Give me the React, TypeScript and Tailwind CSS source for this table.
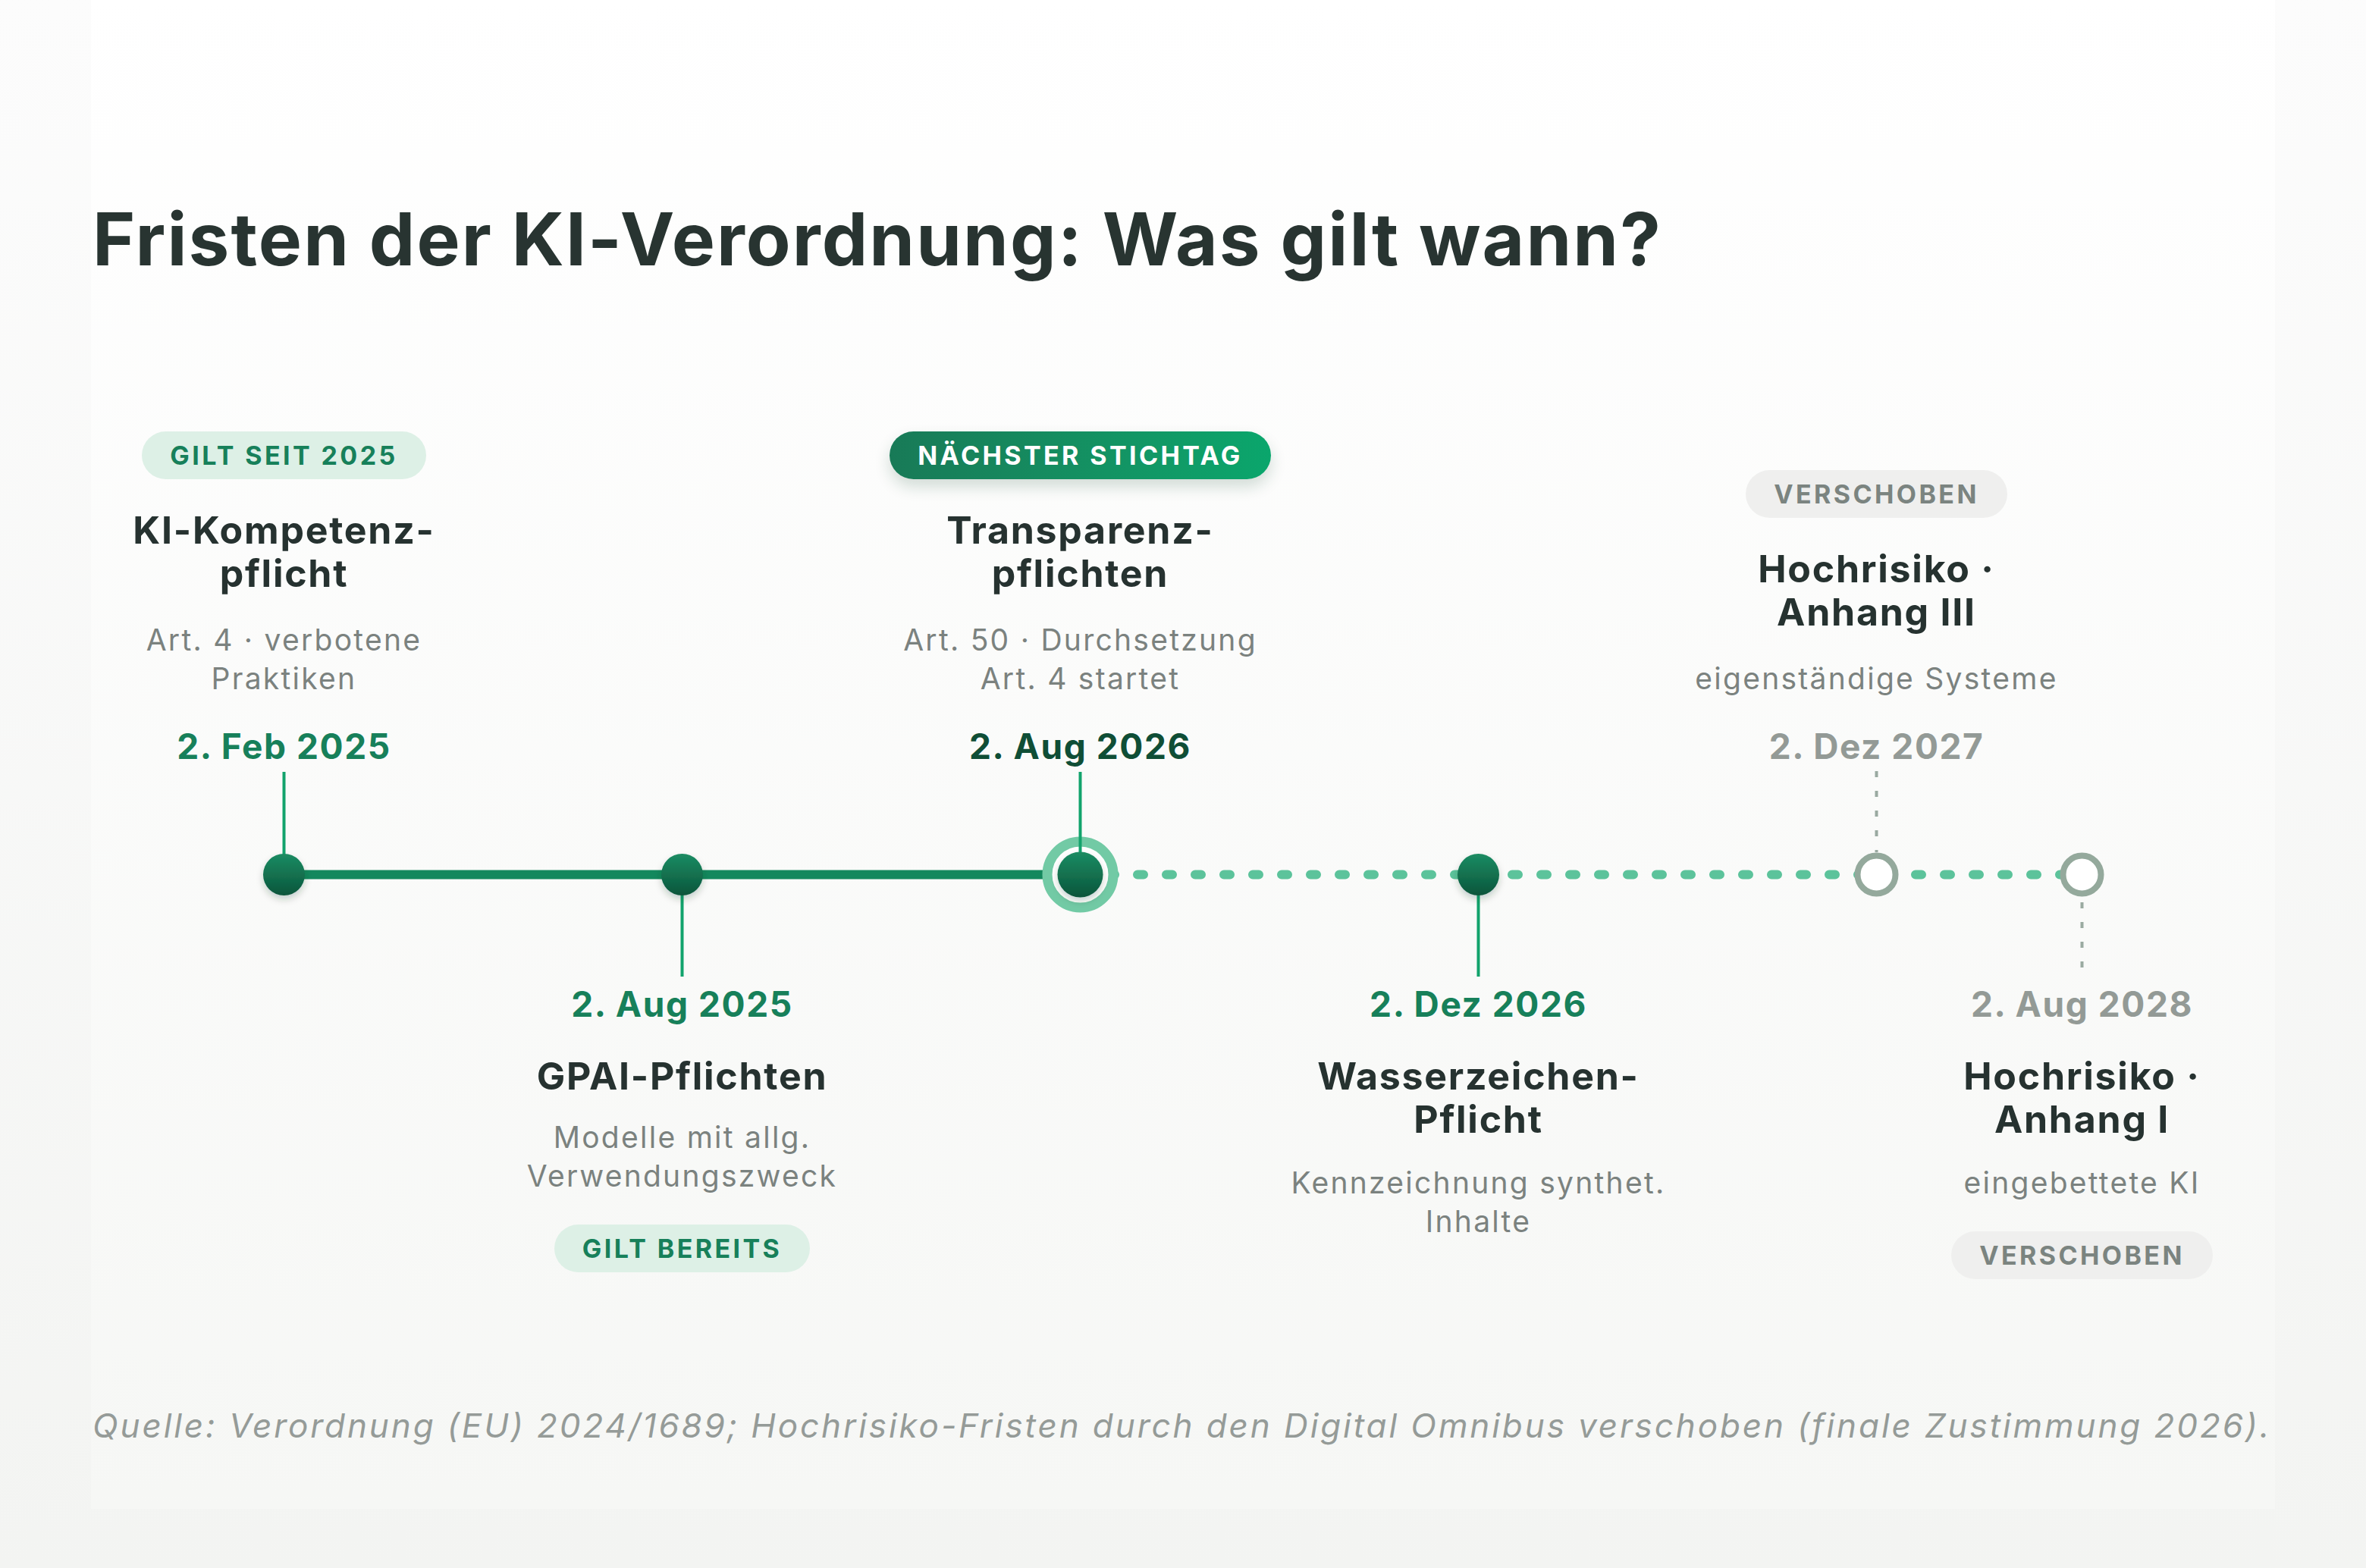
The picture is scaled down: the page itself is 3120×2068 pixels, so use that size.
import React from "react";

type Tone = "soft" | "next" | "muted";
type DateTone = "green" | "dark" | "gray";

type Milestone = {
  date: string;
  dateTone: DateTone;
  title: string[];
  sub: string[];
  badge?: { label: string; tone: Tone };
  side: "top" | "bottom";
};

const milestones: Milestone[] = [
  {
    side: "top",
    badge: { label: "GILT SEIT 2025", tone: "soft" },
    title: ["KI-Kompetenz-", "pflicht"],
    sub: ["Art. 4 · verbotene", "Praktiken"],
    date: "2. Feb 2025",
    dateTone: "green",
  },
  {
    side: "bottom",
    date: "2. Aug 2025",
    dateTone: "green",
    title: ["GPAI-Pflichten"],
    sub: ["Modelle mit allg.", "Verwendungszweck"],
    badge: { label: "GILT BEREITS", tone: "soft" },
  },
  {
    side: "top",
    badge: { label: "NÄCHSTER STICHTAG", tone: "next" },
    title: ["Transparenz-", "pflichten"],
    sub: ["Art. 50 · Durchsetzung", "Art. 4 startet"],
    date: "2. Aug 2026",
    dateTone: "dark",
  },
  {
    side: "bottom",
    date: "2. Dez 2026",
    dateTone: "green",
    title: ["Wasserzeichen-", "Pflicht"],
    sub: ["Kennzeichnung synthet.", "Inhalte"],
  },
  {
    side: "top",
    badge: { label: "VERSCHOBEN", tone: "muted" },
    title: ["Hochrisiko ·", "Anhang III"],
    sub: ["eigenständige Systeme"],
    date: "2. Dez 2027",
    dateTone: "gray",
  },
  {
    side: "bottom",
    date: "2. Aug 2028",
    dateTone: "gray",
    title: ["Hochrisiko ·", "Anhang I"],
    sub: ["eingebettete KI"],
    badge: { label: "VERSCHOBEN", tone: "muted" },
  },
];

// node centres on the x axis (page coordinates)
const NODE_X = [374.5, 899.5, 1424.5, 1949.5, 2474.5, 2745.5];
const LINE_Y = 141.5;

const badgeTone: Record<Tone, string> = {
  soft: "bg-[#ddf0e6] text-[#17805a]",
  next: "bg-linear-to-r from-[#187a57] to-[#0aa66c] text-white shadow-[0_10px_20px_rgba(16,70,45,0.18)]",
  muted: "bg-[#efefee] text-[#7b8480]",
};

const dateTone: Record<DateTone, string> = {
  green: "text-[#17805a]",
  dark: "text-[#0f4e36]",
  gray: "text-[#939a96]",
};

function Badge({ label, tone }: { label: string; tone: Tone }) {
  return (
    <div
      className={`h-[63px] px-[37px] rounded-full flex items-center whitespace-nowrap text-[34px] font-bold tracking-[0.1em] ${badgeTone[tone]}`}
    >
      {label}
    </div>
  );
}

function Lines({ lines, className }: { lines: string[]; className: string }) {
  return (
    <div className={`text-center whitespace-nowrap ${className}`}>
      {lines.map((l) => (
        <div key={l}>{l}</div>
      ))}
    </div>
  );
}

function Title({ lines }: { lines: string[] }) {
  return <Lines lines={lines} className="text-[50px] leading-[57px] font-bold text-[#263230] tracking-[0.035em]" />;
}

function Sub({ lines }: { lines: string[] }) {
  return <Lines lines={lines} className="text-[39px] leading-[51px] text-[#7b827f] tracking-[0.058em]" />;
}

function DateLabel({ m }: { m: Milestone }) {
  return (
    <div className={`h-[56px] leading-[56px] whitespace-nowrap text-[46px] font-bold tracking-[0.034em] ${dateTone[m.dateTone]}`}>
      {m.date}
    </div>
  );
}

function TopItem({ m }: { m: Milestone }) {
  return (
    <div className="flex flex-col items-center justify-end">
      {m.badge && <Badge {...m.badge} />}
      <div className="mt-[39px]">
        <Title lines={m.title} />
      </div>
      <div className="mt-[33px]">
        <Sub lines={m.sub} />
      </div>
      <div className="mt-[36px]">
        <DateLabel m={m} />
      </div>
    </div>
  );
}

function BottomItem({ m }: { m: Milestone }) {
  return (
    <div className="flex flex-col items-center justify-start">
      <DateLabel m={m} />
      <div className="mt-[39px]">
        <Title lines={m.title} />
      </div>
      <div className={m.title.length > 1 ? "mt-[29px]" : "mt-[26px]"}>
        <Sub lines={m.sub} />
      </div>
      {m.badge && (
        <div className="mt-[39px]">
          <Badge {...m.badge} />
        </div>
      )}
    </div>
  );
}

function Track() {
  const [x1, x2, x3, x4, x5, x6] = NODE_X;
  return (
    <svg width="3120" height="284" viewBox="0 0 3120 284" className="block">
      <defs>
        <linearGradient id="dotFill" x1="0" y1="0" x2="0" y2="1">
          <stop offset="0" stopColor="#1b8c63" />
          <stop offset="1" stopColor="#0b553b" />
        </linearGradient>
        <filter id="dotShadow" x="-60%" y="-60%" width="220%" height="220%">
          <feDropShadow dx="0" dy="5" stdDeviation="5" floodColor="#0b3a28" floodOpacity="0.22" />
        </filter>
      </defs>

      {/* done part */}
      <line x1={x1} y1={LINE_Y} x2={x3} y2={LINE_Y} stroke="#13885d" strokeWidth={12} />
      {/* upcoming part */}
      <line
        x1={1462}
        y1={LINE_Y}
        x2={x6 - 20}
        y2={LINE_Y}
        stroke="#5cc39b"
        strokeWidth={12}
        strokeLinecap="round"
        strokeDasharray="8 30"
      />

      {/* stems */}
      <line x1={x1} y1={6} x2={x1} y2={LINE_Y} stroke="#12a36c" strokeWidth={4} />
      <line x1={x2} y1={LINE_Y} x2={x2} y2={276} stroke="#12a36c" strokeWidth={4} />
      <line x1={x4} y1={LINE_Y} x2={x4} y2={276} stroke="#12a36c" strokeWidth={4} />
      <line x1={x5} y1={5} x2={x5} y2={112} stroke="#9aaaa1" strokeWidth={4} strokeDasharray="8 18" />
      <line x1={x6} y1={178} x2={x6} y2={276} stroke="#9aaaa1" strokeWidth={4} strokeDasharray="8 18" />

      {/* nodes */}
      <circle cx={x1} cy={LINE_Y} r={27.5} fill="url(#dotFill)" filter="url(#dotShadow)" />
      <circle cx={x2} cy={LINE_Y} r={27.5} fill="url(#dotFill)" filter="url(#dotShadow)" />
      <circle cx={x3} cy={LINE_Y} r={43.5} fill="#ffffff" stroke="#72caa5" strokeWidth={13} />
      <line x1={x3} y1={6} x2={x3} y2={LINE_Y} stroke="#12a36c" strokeWidth={4} />
      <circle cx={x3} cy={LINE_Y} r={30} fill="url(#dotFill)" filter="url(#dotShadow)" />
      <circle cx={x4} cy={LINE_Y} r={27.5} fill="url(#dotFill)" filter="url(#dotShadow)" />
      <circle cx={x5} cy={LINE_Y} r={25} fill="#ffffff" stroke="#94a99c" strokeWidth={8} />
      <circle cx={x6} cy={LINE_Y} r={25} fill="#ffffff" stroke="#94a99c" strokeWidth={8} />
    </svg>
  );
}

const cols = "grid grid-cols-[525px_525px_525px_525px_525px_17px] ml-[112px]";

export default function App() {
  return (
    <div className="min-h-screen w-[3120px] bg-linear-to-b from-[#fcfcfc] to-[#f3f4f2] font-['Inter','Noto_Sans',sans-serif]">
      <div className="mx-[120px] h-[1990px] bg-linear-to-b from-[#ffffff] to-[#f6f7f5]">
        <div className="-mx-[120px] pt-[267px]">
          <h1 className="pl-[122px] text-[96px] leading-[96px] font-bold text-[#283431] tracking-[0.022em] whitespace-nowrap">
            Fristen der KI-Verordnung: Was gilt wann?
          </h1>

          <div className={`${cols} mt-[206px] items-end`}>
            {milestones.map((m, i) => (
              <div key={i} className="flex flex-col items-center">
                {m.side === "top" && <TopItem m={m} />}
              </div>
            ))}
          </div>

          <Track />

          <div className={`${cols} items-start`}>
            {milestones.map((m, i) => (
              <div key={i} className="flex flex-col items-center">
                {m.side === "bottom" && <BottomItem m={m} />}
              </div>
            ))}
          </div>

          <p className="mt-[167px] pl-[122px] text-[44px] leading-[52px] italic text-[#959b98] tracking-[0.066em] whitespace-nowrap">
            Quelle: Verordnung (EU) 2024/1689; Hochrisiko-Fristen durch den Digital Omnibus verschoben (finale Zustimmung 2026).
          </p>
        </div>
      </div>
    </div>
  );
}
